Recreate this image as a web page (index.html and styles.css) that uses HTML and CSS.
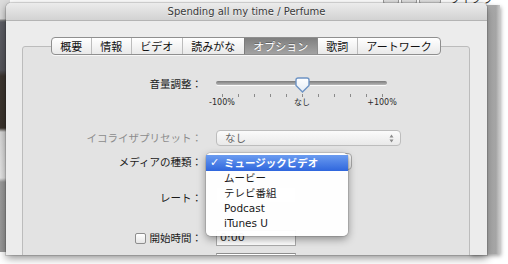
FILE: index.html
```html
<!DOCTYPE html>
<html lang="ja">
<head>
    <meta charset="UTF-8">
    <title>Spending all my time / Perfume</title>
    <link rel="stylesheet" href="styles.css">
</head>
<body>
    <div class="desk">
        <!-- windows behind -->
        <div class="back-left"></div>
        <div class="back-top">
            <span class="bt-btn"></span><span class="bt-btn"></span><span class="bt-btn wide"></span>
            <span class="bt-text">ライブラ</span>
        </div>
        <div class="back-right"></div>

        <!-- info window -->
        <div class="win">
            <div class="titlebar">Spending all my time / Perfume</div>
            <div class="content">
                <div class="tabbox">
                    <div class="tabs">
                        <span class="tab">概要</span>
                        <span class="tab">情報</span>
                        <span class="tab">ビデオ</span>
                        <span class="tab">読みがな</span>
                        <span class="tab selected">オプション</span>
                        <span class="tab">歌詞</span>
                        <span class="tab">アートワーク</span>
                    </div>

                    <div class="form">
                        <div class="row row-volume">
                            <div class="lbl">音量調整：</div>
                            <div class="slider">
                                <div class="track">
                                    <svg class="thumb" width="15" height="16" viewBox="0 0 15 16">
                                        <defs>
                                            <linearGradient id="tg" x1="0" y1="0" x2="0" y2="1">
                                                <stop offset="0" stop-color="#ffffff"/>
                                                <stop offset="1" stop-color="#e4ecf6"/>
                                            </linearGradient>
                                        </defs>
                                        <path d="M3 1 H12 A2 2 0 0 1 14 3 V8.5 L7.5 15 L1 8.5 V3 A2 2 0 0 1 3 1 Z" fill="url(#tg)" stroke="#6d93c4" stroke-width="1.4"/>
                                    </svg>
                                </div>
                                <div class="ticks">
                                    <span></span><span></span><span></span><span></span><span></span><span></span>
                                    <span></span><span></span><span></span><span></span><span></span>
                                </div>
                                <div class="scale">
                                    <span>-100%</span>
                                    <span>なし</span>
                                    <span>+100%</span>
                                </div>
                            </div>
                        </div>

                        <div class="row row-eq">
                            <div class="lbl disabled">イコライザプリセット：</div>
                            <div class="popup eq-popup">
                                <span>なし</span>
                                <svg width="5" height="9" viewBox="0 0 5 9">
                                    <path d="M0.5 3.5 L2.5 0.5 L4.5 3.5 Z M0.5 5.5 L2.5 8.5 L4.5 5.5 Z" fill="#8a8a8a"/>
                                </svg>
                            </div>
                        </div>

                        <div class="row row-media">
                            <div class="lbl">メディアの種類：</div>
                            <div class="popup media-popup">
                                <div class="menu">
                                    <div class="item active"><span class="check">✓</span>ミュージックビデオ</div>
                                    <div class="item"><span class="check"></span>ムービー</div>
                                    <div class="item"><span class="check"></span>テレビ番組</div>
                                    <div class="item"><span class="check"></span>Podcast</div>
                                    <div class="item"><span class="check"></span>iTunes U</div>
                                </div>
                            </div>
                        </div>

                        <div class="row row-rate">
                            <div class="lbl">レート：</div>
                            <div class="rate-field"></div>
                        </div>

                        <div class="row row-start">
                            <div class="lbl"><span class="checkbox"></span>開始時間：</div>
                            <div class="field">0:00</div>
                        </div>

                        <div class="row row-stop">
                            <div class="lbl"></div>
                            <div class="field"></div>
                        </div>
                    </div>
                </div>
            </div>
        </div>
    </div>
</body>
</html>
```

FILE: styles.css
```css
body {
    margin: 0;
    background: #ffffff;
    font-family: "DejaVu Sans", "Noto Sans CJK JP", sans-serif;
    color: #222;
}
.desk {
    position: relative;
    width: 508px;
    height: 264px;
    overflow: hidden;
}

/* windows behind */
.back-left {
    position: absolute;
    left: 0;
    top: 0;
    width: 10px;
    height: 252px;
    background: linear-gradient(#dcdcdc 0, #dcdcdc 19px, #8a8a8a 20px, #5e5f66 22px, #55555b 70px, #3d3630 76px, #3a332c 128px, #d8d8d8 132px, #e6e6e6 178px, #9c9c9c 182px, #9a9a9a 252px);
}
.back-top {
    position: absolute;
    left: 383px;
    top: -6px;
    width: 110px;
    height: 12px;
    display: flex;
    gap: 2px;
}
.bt-btn {
    width: 14px;
    height: 8px;
    border: 1px solid #9a9a9a;
    border-radius: 2px;
    background: linear-gradient(#f4f4f4, #d6d6d6);
}
.bt-btn.wide {
    width: 20px;
}
.bt-text {
    margin-left: 6px;
    font-size: 11px;
    line-height: 12px;
    color: #333;
}
.back-right {
    position: absolute;
    left: 470px;
    top: 5px;
    width: 30px;
    height: 249px;
    background: linear-gradient(to right, #cfcfcf 0, #cfcfcf 16px, #8c8c8c 16px, #b3b3b3 17px, #a9a9a9 23px, #a6a6a6 26px, #c2c2c2 29px, #c8c8c8 30px);
    box-shadow: 1px 2px 4px rgba(0, 0, 0, 0.35);
}

/* main window */
.win {
    position: absolute;
    left: 6px;
    top: 3px;
    width: 481px;
    height: 252px;
    border-radius: 5px 5px 0 0;
    overflow: hidden;
    background: #ececec;
    box-shadow: 0 3px 9px rgba(0, 0, 0, 0.45), 0 0 0 1px rgba(0, 0, 0, 0.12);
}
.titlebar {
    height: 17px;
    line-height: 17px;
    text-align: center;
    font-size: 10px;
    color: #3a3a3a;
    text-shadow: 0 1px 0 rgba(255, 255, 255, 0.6);
    background: linear-gradient(#ececec, #d2d2d2);
    border-bottom: 1px solid #b4b4b4;
}
.content {
    height: 234px;
}
.tabbox {
    margin: 25px 17px 0 16px;
    height: 240px;
    border: 1px solid #bcbcbc;
    border-radius: 3px;
    background: #e3e3e3;
}

/* segmented tabs */
.tabs {
    display: flex;
    width: max-content;
    margin: -10px auto 0;
    height: 16px;
    border: 1px solid #8f8f8f;
    border-radius: 4px;
    overflow: hidden;
    background: linear-gradient(#ffffff, #e9e9e9);
    box-shadow: 0 1px 0 rgba(255, 255, 255, 0.7);
    font-family: "Noto Sans CJK JP", sans-serif;
}
.tab {
    padding: 0 8.5px;
    font-size: 11px;
    line-height: 16px;
    color: #111;
    border-left: 1px solid #bcbcbc;
}
.tab:first-child {
    border-left: none;
}
.tab.selected {
    color: #ffffff;
    border-left-color: #7c7c7c;
    background: linear-gradient(#7f7f7f, #a3a3a3);
    text-shadow: 0 -1px 0 rgba(0, 0, 0, 0.3);
}
.tab.selected + .tab {
    border-left-color: #8c8c8c;
}

/* form rows */
.form {
    padding-top: 21px;
}
.row {
    display: grid;
    grid-template-columns: 179px 255px;
    column-gap: 14px;
    align-items: center;
    height: 16px;
}
.lbl {
    display: flex;
    justify-content: flex-end;
    align-items: center;
    font-size: 10.5px;
    line-height: 16px;
    white-space: nowrap;
    font-family: "Noto Sans CJK JP", sans-serif;
    color: #1a1a1a;
}
.lbl.disabled {
    color: #8c8c8c;
}

.row-volume {
    height: 30px;
    align-items: start;
}
.slider {
    width: 171px;
}
.track {
    position: relative;
    margin-top: 5px;
    height: 4px;
    border-radius: 2px;
    background: linear-gradient(#7a7a7a, #b8b8b8);
    box-shadow: 0 1px 0 rgba(255, 255, 255, 0.8);
}
.thumb {
    position: absolute;
    left: 79px;
    top: -4px;
}
.ticks {
    display: flex;
    gap: 15px;
    padding-left: 6px;
    margin-top: 9px;
    height: 3px;
}
.ticks span {
    width: 1px;
    height: 3px;
    background: #8a8a8a;
}
.scale {
    display: grid;
    grid-template-columns: repeat(3, 80px);
    margin-left: -34px;
    margin-top: 1px;
    font-size: 8px;
    line-height: 9px;
    text-align: center;
    color: #2a2a2a;
}

.popup {
    position: relative;
    box-sizing: border-box;
    height: 16px;
    border: 1px solid #bdbdbd;
    border-radius: 4px;
    background: linear-gradient(#fbfbfb, #e9e9e9);
    font-size: 10.5px;
    line-height: 14px;
    font-family: "Noto Sans CJK JP", sans-serif;
}
.row-eq {
    margin-top: 24px;
}
.eq-popup {
    width: 185px;
    display: flex;
    justify-content: space-between;
    align-items: center;
    padding: 0 6px 0 8px;
    color: #666;
}
.row-media {
    margin-top: 7px;
    height: 17px;
}
.media-popup {
    width: 136px;
    height: 17px;
    border-color: #a9a9a9;
}
.menu {
    position: absolute;
    left: -11px;
    top: -1px;
    width: 142px;
    padding: 2px 0 5px;
    border-radius: 5px;
    background: rgba(255, 255, 255, 0.96);
    box-shadow: 0 3px 9px rgba(0, 0, 0, 0.4), 0 0 0 1px rgba(0, 0, 0, 0.1);
    z-index: 5;
}
.item {
    display: flex;
    padding-left: 4px;
    height: 15px;
    font-size: 10.5px;
    line-height: 15px;
    color: #1a1a1a;
    font-family: "DejaVu Sans", "Noto Sans CJK JP", sans-serif;
}
.item.active {
    height: 16px;
    line-height: 16px;
    color: #ffffff;
    font-weight: bold;
    background: linear-gradient(#6b9cf0, #2f66dd);
}
.check {
    width: 14px;
    font-size: 11px;
    font-weight: bold;
}

.row-rate {
    margin-top: 20px;
}
.rate-field {
    box-sizing: border-box;
    width: 80px;
    height: 16px;
    margin-top: -6px;
    border: 1px solid #d4d4d4;
    background: #f4f4f4;
}

.row-start {
    margin-top: 24px;
}
.checkbox {
    box-sizing: border-box;
    width: 11px;
    height: 11px;
    margin-right: 4px;
    border: 1px solid #8e8e8e;
    border-radius: 2px;
    background: linear-gradient(#ffffff, #e6e6e6);
}
.field {
    box-sizing: border-box;
    width: 80px;
    height: 16px;
    padding-left: 3px;
    border: 1px solid #ababab;
    border-top-color: #8e8e8e;
    background: #ffffff;
    font-size: 11px;
    line-height: 14px;
    color: #222;
}
.row-stop {
    margin-top: 7px;
}
```
